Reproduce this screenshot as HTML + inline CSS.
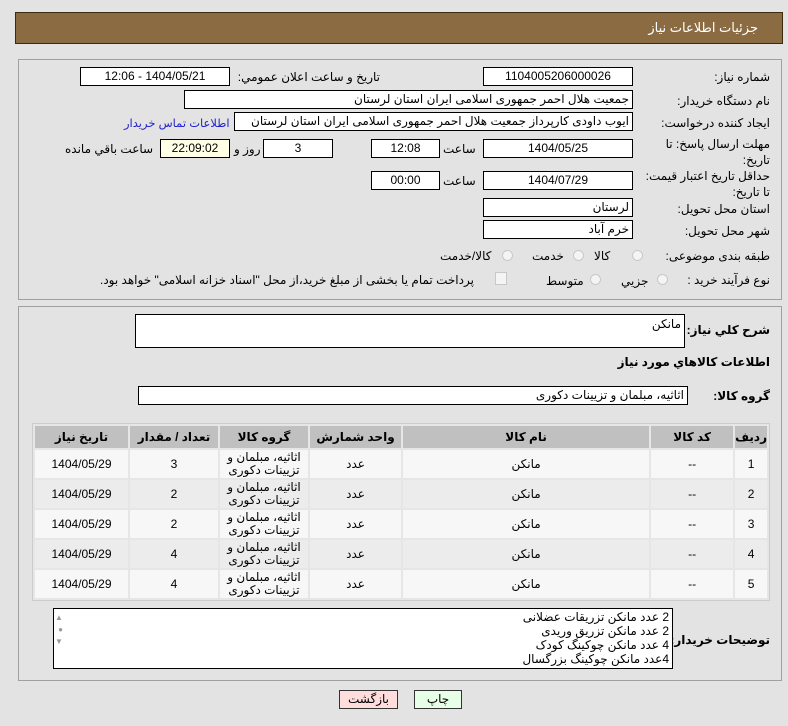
<!DOCTYPE html>
<html><head><meta charset="utf-8"><style>
body{margin:0;width:788px;height:726px;background:#e3e3e3;font-family:"Liberation Sans","DejaVu Sans",sans-serif;font-size:12px;color:#000;position:relative;overflow:hidden;direction:rtl}
.a{position:absolute}
.box{position:absolute;background:#fff;border:1px solid #000;box-sizing:border-box;height:19px;line-height:17px;padding:0 3px;white-space:nowrap;overflow:hidden}
.c{text-align:center}
.l{position:absolute;white-space:nowrap}
.b{font-weight:bold;font-size:12px}
.panel{position:absolute;border:1px solid #a0a0a0;box-sizing:border-box;background:#e3e3e3}
.rad{position:absolute;width:11px;height:11px;border-radius:50%;border:1px solid #c8c8c8;background:#f4f4f4;box-sizing:border-box}
table{border-collapse:separate;border-spacing:2px;position:absolute;left:32px;top:423px;width:738px;background:#e6e6e6;border:1px solid #ccc}
td,th{text-align:center;font-size:12px;padding:0}
th{background:#c0c0c0;height:22px;font-weight:bold}
td{height:28px;line-height:13px}
tr.o td{background:#f7f7f7} tr.e td{background:#ececec}
</style></head><body>
<div class="a" style="left:15px;top:12px;width:768px;height:32px;background:#8b6c42;border:1px solid #3a2a10;box-sizing:border-box"></div>
<div class="l" style="right:30px;top:20px;color:#fff;font-size:13px">جزئیات اطلاعات نیاز</div>

<div class="panel" style="left:18px;top:59px;width:764px;height:241px"></div>
<div class="l" style="right:18px;top:70px">شماره نیاز:</div>
<div class="box c" style="left:483px;top:67px;width:150px">1104005206000026</div>
<div class="l" style="right:408px;top:70px">تاریخ و ساعت اعلان عمومي:</div>
<div class="box c" style="left:80px;top:67px;width:150px">1404/05/21 - 12:06</div>
<div class="l" style="right:18px;top:94px">نام دستگاه خریدار:</div>
<div class="box" style="left:184px;top:90px;width:449px">جمعیت هلال احمر جمهوری اسلامی ایران استان لرستان</div>
<div class="l" style="right:18px;top:116px">ایجاد کننده درخواست:</div>
<div class="box" style="left:234px;top:112px;width:399px">ایوب داودی کارپرداز جمعیت هلال احمر جمهوری اسلامی ایران استان لرستان</div>
<div class="l" style="left:124px;top:116px;color:#2222cc;font-size:11.5px">اطلاعات تماس خریدار</div>
<div class="l" style="right:18px;top:136px;line-height:16px">مهلت ارسال پاسخ: تا<br>تاریخ:</div>
<div class="box c" style="left:483px;top:139px;width:150px">1404/05/25</div>
<div class="l" style="left:443px;top:142px">ساعت</div>
<div class="box c" style="left:371px;top:139px;width:69px">12:08</div>
<div class="box c" style="left:263px;top:139px;width:70px">3</div>
<div class="l" style="left:234px;top:142px">روز و</div>
<div class="box c" style="left:160px;top:139px;width:70px;background:#ffffe6">22:09:02</div>
<div class="l" style="left:65px;top:142px">ساعت باقي مانده</div>
<div class="l" style="right:18px;top:168px;line-height:16px">حداقل تاریخ اعتبار قیمت:<br>تا تاریخ:</div>
<div class="box c" style="left:483px;top:171px;width:150px">1404/07/29</div>
<div class="l" style="left:443px;top:174px">ساعت</div>
<div class="box c" style="left:371px;top:171px;width:69px">00:00</div>
<div class="l" style="right:18px;top:202px">استان محل تحویل:</div>
<div class="box" style="left:483px;top:198px;width:150px">لرستان</div>
<div class="l" style="right:18px;top:224px">شهر محل تحویل:</div>
<div class="box" style="left:483px;top:220px;width:150px">خرم آباد</div>
<div class="l" style="right:18px;top:249px">طبقه بندی موضوعی:</div>
<div class="rad" style="left:632px;top:250px"></div><div class="l" style="left:594px;top:249px">کالا</div>
<div class="rad" style="left:573px;top:250px"></div><div class="l" style="left:532px;top:249px">خدمت</div>
<div class="rad" style="left:502px;top:250px"></div><div class="l" style="left:440px;top:249px">کالا/خدمت</div>
<div class="l" style="right:18px;top:273px">نوع فرآیند خرید :</div>
<div class="rad" style="left:657px;top:274px"></div><div class="l" style="left:621px;top:274px">جزیي</div>
<div class="rad" style="left:590px;top:274px"></div><div class="l" style="left:546px;top:274px">متوسط</div>
<div class="a" style="left:495px;top:272px;width:10px;height:11px;border:1px solid #c8c8c8;background:#f4f4f4"></div>
<div class="l" style="left:100px;top:273px">پرداخت تمام یا بخشی از مبلغ خرید،از محل "اسناد خزانه اسلامی" خواهد بود.</div>

<div class="panel" style="left:18px;top:306px;width:764px;height:375px"></div>
<div class="l b" style="right:18px;top:323px">شرح كلي نياز:</div>
<div class="box" style="left:135px;top:314px;width:550px;height:34px;line-height:18px">مانکن</div>
<div class="l b" style="right:18px;top:355px">اطلاعات کالاهاي مورد نياز</div>
<div class="l b" style="right:18px;top:389px">گروه کالا:</div>
<div class="box" style="left:138px;top:386px;width:550px">اثاثیه، مبلمان و تزیینات دکوری</div>

<table>
<tr><th style="width:29px">ردیف</th><th style="width:82px">کد کالا</th><th>نام کالا</th><th style="width:91px">واحد شمارش</th><th style="width:88px">گروه کالا</th><th style="width:88px">تعداد / مقدار</th><th style="width:93px">تاریخ نیاز</th></tr>
<tr class="o"><td>1</td><td>--</td><td>مانکن</td><td>عدد</td><td>اثاثیه، مبلمان و<br>تزیینات دکوری</td><td>3</td><td>1404/05/29</td></tr>
<tr class="e"><td>2</td><td>--</td><td>مانکن</td><td>عدد</td><td>اثاثیه، مبلمان و<br>تزیینات دکوری</td><td>2</td><td>1404/05/29</td></tr>
<tr class="o"><td>3</td><td>--</td><td>مانکن</td><td>عدد</td><td>اثاثیه، مبلمان و<br>تزیینات دکوری</td><td>2</td><td>1404/05/29</td></tr>
<tr class="e"><td>4</td><td>--</td><td>مانکن</td><td>عدد</td><td>اثاثیه، مبلمان و<br>تزیینات دکوری</td><td>4</td><td>1404/05/29</td></tr>
<tr class="o"><td>5</td><td>--</td><td>مانکن</td><td>عدد</td><td>اثاثیه، مبلمان و<br>تزیینات دکوری</td><td>4</td><td>1404/05/29</td></tr>
</table>

<div class="l b" style="right:18px;top:633px">توضیحات خریدار:</div>
<div class="box" style="left:53px;top:608px;width:620px;height:61px;line-height:14px;padding-top:1px">2 عدد مانکن تزریقات عضلانی<br>2 عدد مانکن تزریق وریدی<br>4 عدد مانکن چوکینگ کودک<br>4عدد مانکن چوکینگ بزرگسال</div>
<div class="a" style="left:55px;top:612px;color:#999;font-size:8px;line-height:12px">▲<br>●<br>▼</div>

<div class="a c" style="left:339px;top:690px;width:59px;height:19px;border:1px solid #333;box-sizing:border-box;background:#fdd;line-height:17px">بازگشت</div>
<div class="a c" style="left:414px;top:690px;width:48px;height:19px;border:1px solid #333;box-sizing:border-box;background:#e6ffe6;line-height:17px">چاپ</div>
</body></html>
